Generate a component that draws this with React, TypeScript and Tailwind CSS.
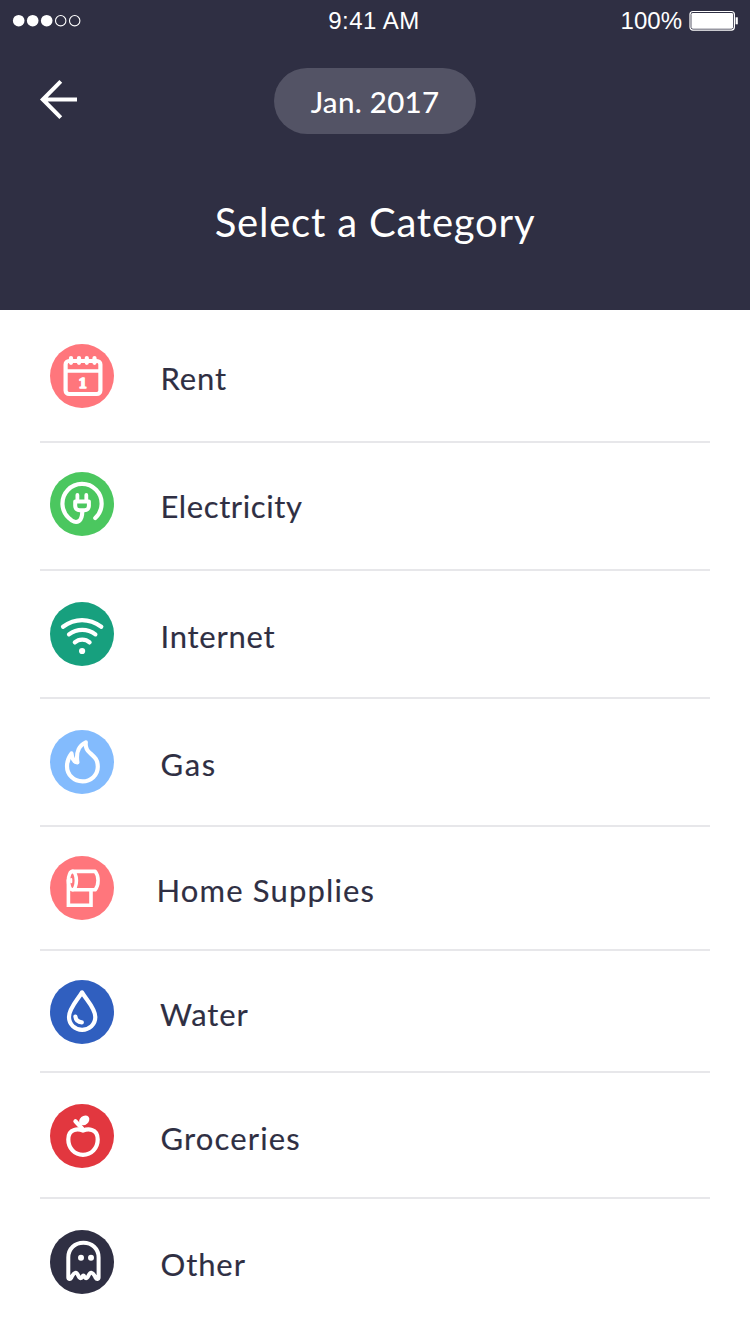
import type { ReactNode } from "react";

type Category = {
  name: string;
  row: string;
  circle: string;
  label: string;
  icon: ReactNode;
};

const categories: Category[] = [
  {
    name: "Rent",
    row: "h-[133px] pt-[34px] border-b-2",
    circle: "bg-[#ff767c]",
    label: "ml-[46.5px] tracking-[0.9px]",
    icon: (
      <>
        <rect x="15.6" y="17" width="34.8" height="33" rx="3.5" />
        <path d="M16 27H50" strokeWidth="3.6" />
        <path d="M21 14V18.8M29 14V18.8M36.8 14V18.8M44.5 14V18.8" strokeWidth="4.2" />
        <text
          x="32.8"
          y="43.6"
          textAnchor="middle"
          fill="white"
          strokeWidth="1.3"
          className="font-['DejaVu_Serif',serif] text-[13px] font-bold"
        >
          1
        </text>
      </>
    ),
  },
  {
    name: "Electricity",
    row: "h-[128px] pt-[29px] border-b-2",
    circle: "bg-[#4bc75f]",
    label: "ml-[46.5px] tracking-[0.6px]",
    icon: (
      <>
        <path d="M45.3 46A19.6 19.6 0 1 0 19 46.2C22 49.5 26 51 29 49C32 47 32.3 44 32.3 39" />
        <path d="M25.2 29.4H38.9V34C38.9 36.4 37 38.2 34.6 38.2H29.6C27 38.2 25.2 36.4 25.2 34Z" strokeWidth="4" />
        <path d="M27.4 23V28M36.3 23V28" strokeWidth="3.8" />
      </>
    ),
  },
  {
    name: "Internet",
    row: "h-[128px] pt-[31px] border-b-2",
    circle: "bg-[#17a07e]",
    label: "ml-[46.5px] tracking-[0.75px]",
    icon: (
      <>
        <path d="M13 24.7C25 15.8 39 15.8 51.3 24.7" />
        <path d="M19 32.4C27 26.4 37.5 26.4 45.4 32.4" />
        <path d="M24.8 40.4C29 36.6 35.5 36.6 39.6 40.4" />
        <circle cx="32.1" cy="49" r="3.1" fill="white" stroke="none" />
      </>
    ),
  },
  {
    name: "Gas",
    row: "h-[128px] pt-[31px] border-b-2",
    circle: "bg-[#83bbfd]",
    label: "ml-[46.5px] tracking-[1.7px]",
    icon: (
      <path d="M35.8 12.4C29.5 15 25.8 22 27.4 32.4C24 32 22 28.5 21.5 23.4C18 28 17 32 17 36.2C17 45 24 51.4 32.5 51.4C41 51.4 47.8 45 47.8 36.8C47.8 29.5 44.5 27 40 23C36.5 20 35.3 16 35.8 12.4Z" />
    ),
  },
  {
    name: "Home Supplies",
    row: "h-[124px] pt-[29px] border-b-2",
    circle: "bg-[#ff767c]",
    label: "ml-[42.5px] tracking-[1.15px]",
    icon: (
      <>
        <path d="M18.4 24V49.2H41V34" strokeWidth="3.6" strokeLinejoin="miter" />
        <path d="M22.6 15.4H45.2C49 20 49 29 45.2 33.8H22.6" strokeWidth="3.6" />
        <ellipse cx="22.4" cy="24.6" rx="4" ry="9.2" strokeWidth="3.6" />
        <path d="M21.2 23V26.2" strokeWidth="2.2" />
      </>
    ),
  },
  {
    name: "Water",
    row: "h-[122px] pt-[29px] border-b-2",
    circle: "bg-[#305fbf]",
    label: "ml-[46px] tracking-[0.9px]",
    icon: (
      <>
        <path d="M32 12.4C28 19.5 19 28 19 37C19 44.5 25 49.8 32.1 49.8C39.3 49.8 45.3 44.5 45.3 37C45.3 28 36 19.5 32 12.4Z" />
        <path d="M25.4 36.6C25.8 40 28 42.2 31.8 42.4" strokeWidth="4.2" />
      </>
    ),
  },
  {
    name: "Groceries",
    row: "h-[126px] pt-[31px] border-b-2",
    circle: "bg-[#e2373f]",
    label: "ml-[46.5px] tracking-[1.15px]",
    icon: (
      <>
        <path d="M33 26.6C29 25 18.3 23.5 18.3 35.5C18.3 44 24.5 50.8 33 50.8C41.5 50.8 47.7 44 47.7 35.5C47.7 23.5 37 25 33 26.6Z" />
        <path d="M25.4 17.2L33 25.4" />
        <ellipse
          cx="34.2"
          cy="16.4"
          rx="5.6"
          ry="4.4"
          transform="rotate(-40 34.2 16.4)"
          fill="white"
          stroke="none"
        />
      </>
    ),
  },
  {
    name: "Other",
    row: "h-[135px] pt-[31px]",
    circle: "bg-[#2f2f43]",
    label: "ml-[46.5px] tracking-[0.9px]",
    icon: (
      <>
        <path
          d="M18.3 47.6V27.5C18.3 18.5 25 12.8 33.4 12.8C41.8 12.8 48.6 18.5 48.6 27.5V47.6C48.6 49.2 46.6 49.4 45.8 48C44 44.6 43 42.8 41.2 42.8C38.6 42.8 38.4 48.2 36 48.2C34.4 48.2 34.6 45.6 33.4 45.6C32.2 45.6 32.4 48.2 30.8 48.2C28.4 48.2 28.2 42.8 25.7 42.8C23.9 42.8 22.9 44.6 21.1 48C20.3 49.4 18.3 49.2 18.3 47.6Z"
          strokeWidth="4"
        />
        <g fill="white" stroke="none">
          <circle cx="31" cy="27.8" r="3" />
          <circle cx="41" cy="27.8" r="3" />
        </g>
      </>
    ),
  },
];

function CategoryRow({ name, row, circle, label, icon }: Category) {
  return (
    <li className={`flex items-start border-[#e7e7ea] pl-[10px] ${row}`}>
      <span className={`size-16 shrink-0 rounded-full ${circle}`}>
        <svg
          viewBox="0 0 64 64"
          className="size-16"
          fill="none"
          stroke="white"
          strokeWidth="4.2"
          strokeLinecap="round"
          strokeLinejoin="round"
        >
          {icon}
        </svg>
      </span>
      <span
        className={`mt-[2px] whitespace-nowrap text-[31px] leading-[64px] [-webkit-text-stroke:0.15px_#2f2f43] ${label}`}
      >
        {name}
      </span>
    </li>
  );
}

function StatusBar() {
  return (
    <div className="grid h-[42px] grid-cols-3 items-center font-['Liberation_Sans',Arial,sans-serif] text-[24px] leading-[42px]">
      <svg viewBox="0 0 90 42" className="h-[42px] w-[90px]" fill="white">
        <circle cx="18.7" cy="20.7" r="5.8" />
        <circle cx="32.7" cy="20.7" r="5.8" />
        <circle cx="46.7" cy="20.7" r="5.8" />
        <g fill="none" stroke="white" strokeWidth="1.1">
          <circle cx="60.7" cy="20.7" r="5.2" />
          <circle cx="74.7" cy="20.7" r="5.2" />
        </g>
      </svg>
      <span className="pr-[2px] text-center tracking-[0.5px]">9:41 AM</span>
      <div className="flex items-center justify-end gap-[7px] pr-[11px]">
        <span>100%</span>
        <svg viewBox="0 0 50 42" className="h-[42px] w-[50px]">
          <rect x="1" y="11.5" width="44.4" height="18.6" rx="3" fill="none" stroke="white" strokeWidth="1.2" />
          <rect x="2.4" y="12.9" width="41.6" height="15.8" rx="1.4" fill="white" />
          <path d="M46.6 17.3H48.8V24.3H46.6Z" fill="white" />
        </svg>
      </div>
    </div>
  );
}

export default function App() {
  return (
    <div className="h-[1334px] w-[750px] overflow-hidden bg-white font-['Lato',sans-serif] text-[#2f2f43]">
      <header className="h-[310px] bg-[#2f2f43] text-white">
        <StatusBar />
        <div className="grid grid-cols-[1fr_202px_1fr] items-start pt-[26px]">
          <button type="button" aria-label="Back" className="ml-[38px] mt-[10px] h-[44px] w-[44px]">
            <svg viewBox="0 0 44 44" className="size-[44px]" fill="none" stroke="white" strokeWidth="4">
              <path d="M39 21.5H5M22.8 3.4L4.8 21.5L22.8 39.6" />
            </svg>
          </button>
          <div className="h-[66px] rounded-full bg-[#535365] text-center text-[29.5px] font-medium leading-[67px] tracking-[0.3px]">
            Jan. 2017
          </div>
        </div>
        <h1 className="mt-[57px] text-center text-[40px] leading-[62px] tracking-[0.8px]">Select a Category</h1>
      </header>
      <ul className="mx-[40px]">
        {categories.map((category) => (
          <CategoryRow key={category.name} {...category} />
        ))}
      </ul>
    </div>
  );
}
